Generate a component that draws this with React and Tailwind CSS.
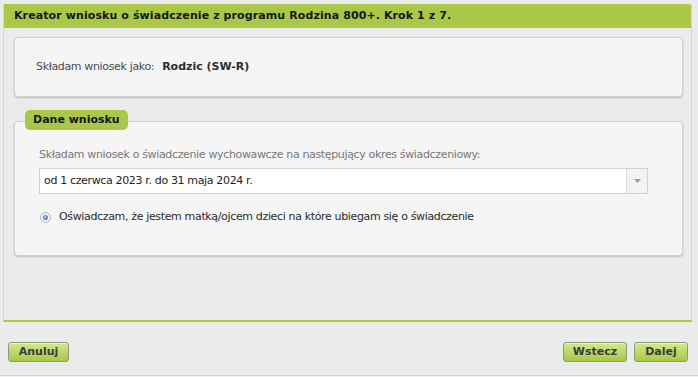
import React from 'react';

const font = { fontFamily: '"DejaVu Sans", Verdana, sans-serif' };

const GreenButton = ({ children, className = '' }) => (
  <button
    className={`h-[20px] rounded-[3px] border border-[#8d9a78] bg-gradient-to-b from-[#d3e88f] to-[#a6c843] text-[11px] font-bold text-[#3b3b3b] shadow-[inset_0_1px_0_rgba(255,255,255,0.6)] ${className}`}
  >
    {children}
  </button>
);

const Radio = () => (
  <svg width="11" height="11" viewBox="0 0 11 11" className="shrink-0">
    <circle cx="5.5" cy="5.5" r="5" fill="#eef2f7" stroke="#a9b7c9" />
    <circle cx="5.5" cy="5.5" r="2.6" fill="#6c93c4" />
    <circle cx="5" cy="5" r="1" fill="#a9c4e6" />
  </svg>
);

export default function App() {
  return (
    <div className="w-[698px] h-[377px] bg-[#ebebeb] overflow-hidden flex flex-col" style={font}>
      <div className="ml-[3px] mt-[4px] w-[689px] flex flex-col border-x border-[#d5d5d5] border-b-2 border-b-[#a8c947]">
        <div className="h-[24px] bg-[#a9c847] rounded-tr-[2px] flex items-center pl-[10px] text-[11px] font-bold text-[#151515] tracking-[0.1px]">
          Kreator wniosku o świadczenie z programu Rodzina 800+. Krok 1 z 7.
        </div>
        <div className="pl-[10px] pr-[8px] pt-[9px] pb-[64px]">
          <div className="h-[60px] rounded-[4px] border border-[#d0d0d0] bg-[#f5f5f5] shadow-[0_1px_2px_rgba(0,0,0,0.18)] flex items-center pl-[21px] text-[11px]">
            <span className="text-[#4a4a4a] tracking-[-0.35px]">Składam wniosek jako:</span>
            <span className="ml-[8px] font-bold text-[#2e2e2e]">Rodzic (SW-R)</span>
          </div>
          <div className="mt-[9px]">
            <div className="relative z-10 ml-[11px] inline-flex h-[20px] items-center rounded-[5px] bg-[#a9c847] px-[8px] text-[11px] font-bold text-[#151515]">
              Dane wniosku
            </div>
            <div className="-mt-[9px] h-[135px] rounded-[4px] border border-[#d0d0d0] bg-[#f5f5f5] shadow-[0_1px_2px_rgba(0,0,0,0.18)] pl-[24px] pr-[34px] pt-[25px] tracking-[-0.35px]">
              <div className="text-[11px] text-[#777777] leading-[16px]">
                Składam wniosek o świadczenie wychowawcze na następujący okres świadczeniowy:
              </div>
              <div className="mt-[5px] h-[26px] flex border border-[#cfd3d8] bg-white">
                <div className="flex-1 flex items-center pl-[4px] text-[11px] text-[#222222]">
                  od 1 czerwca 2023 r. do 31 maja 2024 r.
                </div>
                <div className="w-[21px] border-l border-[#d6d9dd] bg-[#f3f3f3] flex items-center justify-center">
                  <svg width="7" height="4" viewBox="0 0 7 4">
                    <path d="M0 0 H7 L3.5 4 Z" fill="#8a9cb8" />
                  </svg>
                </div>
              </div>
              <div className="mt-[15px] flex items-center gap-[8px] pl-[1px] text-[11px] text-[#2a2a2a]">
                <Radio />
                <span>Oświadczam, że jestem matką/ojcem dzieci na które ubiegam się o świadczenie</span>
              </div>
            </div>
          </div>
        </div>
      </div>
      <div className="mt-[20px] flex items-start justify-between pl-[8px] pr-[10px]">
        <GreenButton className="w-[61px]">Anuluj</GreenButton>
        <div className="flex gap-[7px]">
          <GreenButton className="w-[64px]">Wstecz</GreenButton>
          <GreenButton className="w-[54px]">Dalej</GreenButton>
        </div>
      </div>
      <div className="mt-[13px] border-t border-[#d2d2d2] flex-1 bg-[#f2f2f2]" />
    </div>
  );
}
